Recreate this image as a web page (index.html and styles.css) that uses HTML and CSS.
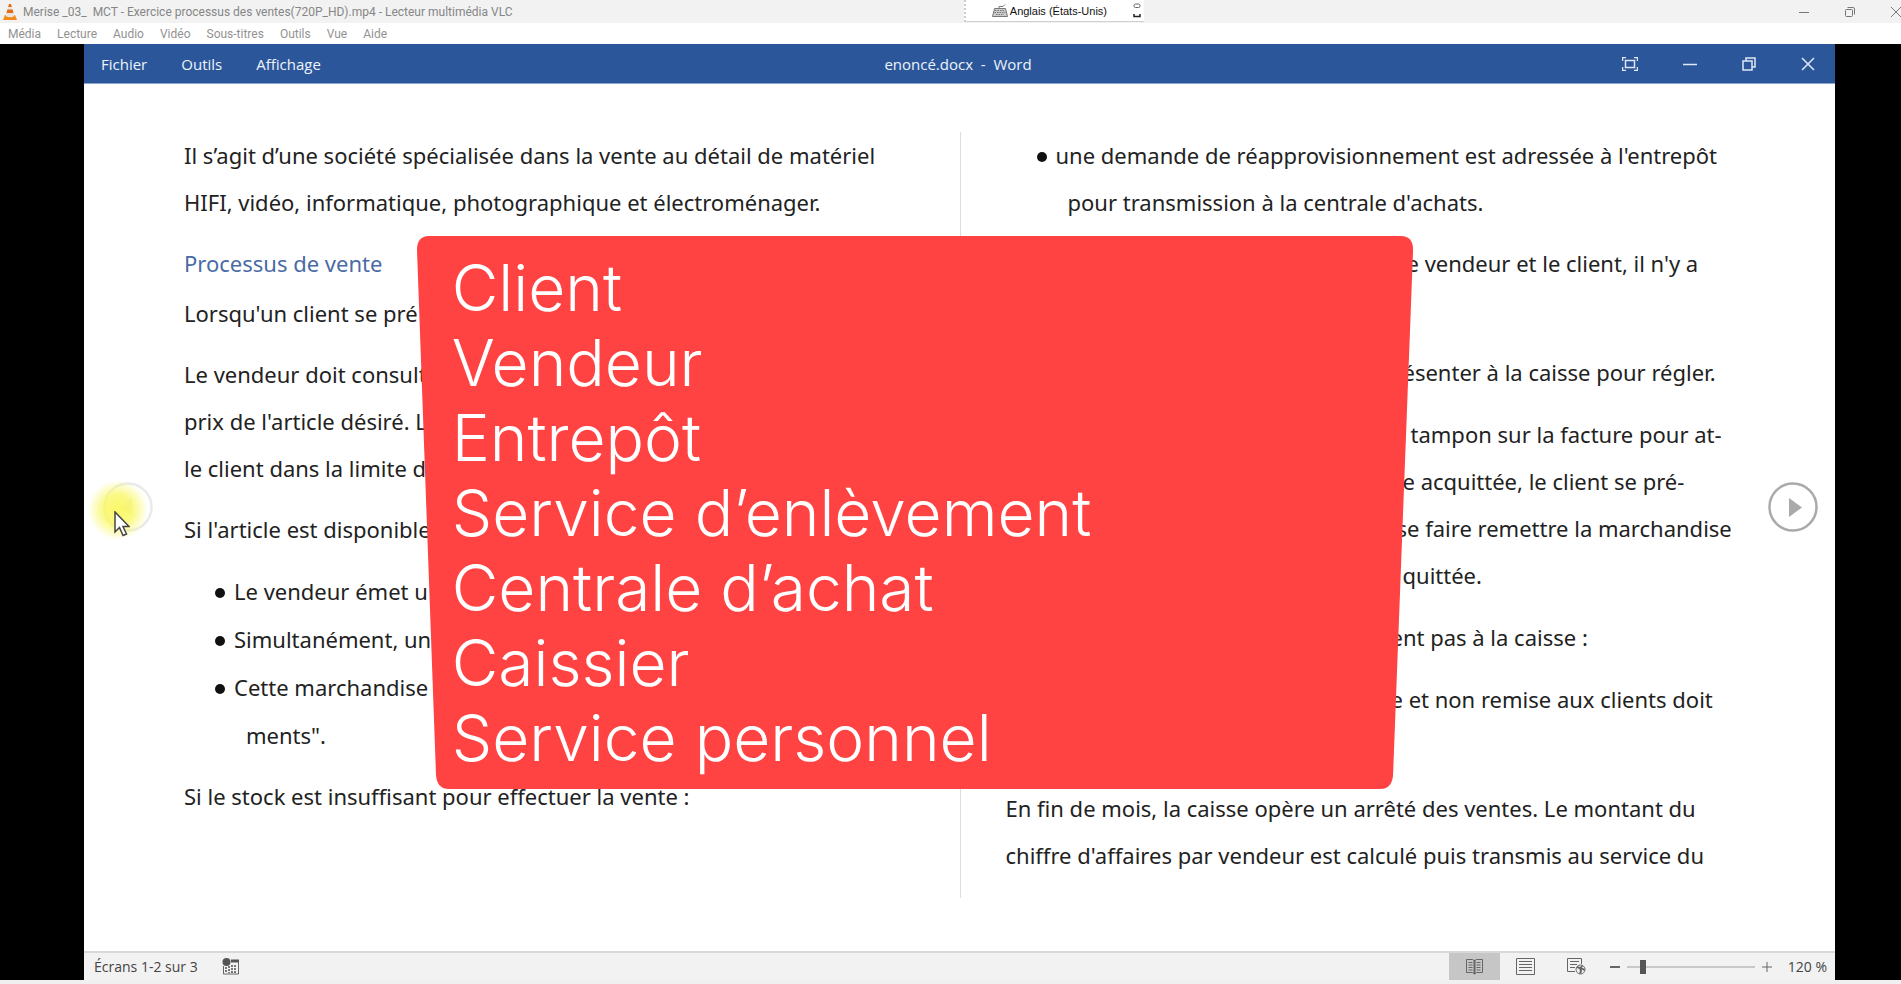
FILE: index.html
```
<!DOCTYPE html>
<html lang="fr">
<head>
<meta charset="utf-8">
<title>Lecteur multimédia VLC</title>
<link rel="stylesheet" href="styles.css">
</head>
<body>
<header class="titlebar">
  <svg class="cone" width="14" height="16" viewBox="0 0 14 16">
    <path d="M2 11h10l2 5H0z" fill="#f58a1c"/>
    <path d="M5.600 1h2.800l3 11q-4.400 2.500-8.800 0z" fill="#e8e4e0"/>
    <path d="M6 0h2l.8 3H5.200zM4.400 5.500h5.200l.9 3.500h-7z" fill="#e56a12"/>
  </svg>
  <span class="apptitle">Merise _03_&nbsp; MCT - Exercice processus des ventes(720P_HD).mp4 - Lecteur multimédia VLC</span>
  <div class="langbar">
    <svg width="16" height="13" viewBox="0 0 16 13" fill="none" stroke="#777">
      <path d="M7 4V2.500h4L13 .5"/><path d="M2.500 4.500h11l2 8H.5z" fill="#ccc"/>
      <path d="M3 6.500h10M2.500 8.500h11M4 10.500h8" stroke-dasharray="1.500 1"/>
    </svg>
    <span>Anglais (États-Unis)</span>
    <svg class="langopts" width="8" height="15" viewBox="0 0 8 15" fill="none" stroke="#666"><rect x="1" y="1" width="6" height="3.500" rx="1.500"/><path d="M1 11v2.500h6V11" stroke="#222" stroke-width="1.500"/></svg>
  </div>
  <div class="wincontrols">
    <button aria-label="Réduire"><svg width="10" height="10" viewBox="0 0 10 10"><path d="M0 5.500h10"/></svg></button>
    <button aria-label="Restaurer"><svg width="10" height="10" viewBox="0 0 10 10"><rect x=".5" y="2.500" width="7" height="7" rx="1"/><path d="M2.500 .5h5.500q1.500 0 1.500 1.500v5.500"/></svg></button>
    <button aria-label="Fermer"><svg width="10" height="10" viewBox="0 0 10 10"><path d="M0 0l10 10M10 0L0 10"/></svg></button>
  </div>
</header>
<nav class="menubar">
  <button>Média</button><button>Lecture</button><button>Audio</button><button>Vidéo</button><button>Sous-titres</button><button>Outils</button><button>Vue</button><button>Aide</button>
</nav>
<main class="video">
  <section class="word">
    <header class="wordbar">
      <nav class="wordmenu"><button>Fichier</button><button>Outils</button><button>Affichage</button></nav>
      <h1>enoncé.docx&nbsp; -&nbsp; Word</h1>
      <div class="wordcontrols">
        <button aria-label="Plein écran"><svg width="16" height="14" viewBox="0 0 16 14"><path d="M.5 4V.5H4M12 .5h3.500V4M15.500 10v3.500H12M4 13.500H.5V10"/><rect x="3.500" y="3.500" width="9" height="7"/></svg></button>
        <button aria-label="Réduire"><svg width="14" height="14" viewBox="0 0 14 14"><path d="M0 7.500h14"/></svg></button>
        <button aria-label="Restaurer"><svg width="14" height="14" viewBox="0 0 14 14"><rect x="1" y="4" width="9" height="9"/><path d="M4 4V1h9v9h-3"/></svg></button>
        <button aria-label="Fermer"><svg width="14" height="14" viewBox="0 0 14 14"><path d="M1 1l12 12M13 1L1 13"/></svg></button>
      </div>
    </header>
    <div class="reader">
      <article class="column">
        <p>Il s’agit d’une société spécialisée dans la vente au détail de matériel<br>HIFI, vidéo, informatique, photographique et électroménager.</p>
        <h2>Processus de vente</h2>
        <p>Lorsqu'un client se pré</p>
        <p>Le vendeur doit consult<br>prix de l'article désiré. L<br>le client dans la limite d</p>
        <p>Si l'article est disponible</p>
        <ul>
          <li>Le vendeur émet u</li>
          <li>Simultanément, un</li>
          <li>Cette marchandise<br><span class="hang">ments".</span></li>
        </ul>
        <p>Si le stock est insuffisant pour effectuer la vente :</p>
      </article>
      <article class="column right">
        <ul>
          <li>une demande de réapprovisionnement est adressée à l'entrepôt<br><span class="hang">pour transmission à la centrale d'achats.</span></li>
        </ul>
        <p class="far two">e vendeur et le client, il n'y a</p>
        <p class="mid">ésenter à la caisse pour régler.</p>
        <p class="mid"><span class="tab">tampon sur la facture pour at-</span><br>e acquittée, le client se pré-<br><span class="out">se faire remettre la marchandise</span><br>quittée.</p>
        <p class="near">ent pas à la caisse :</p>
        <p class="near two">e et non remise aux clients doit</p>
        <p>En fin de mois, la caisse opère un arrêté des ventes. Le montant du<br>chiffre d'affaires par vendeur est calculé puis transmis au service du</p>
      </article>
      <button class="pager prev" aria-label="Écran précédent"><svg width="50" height="50" viewBox="0 0 50 50"><circle cx="25" cy="25" r="23.500" fill="none" stroke="#777" stroke-width="2.500"/><path d="M29 16v18l-12-9z" fill="#777"/></svg></button>
      <button class="pager next" aria-label="Écran suivant"><svg width="50" height="50" viewBox="0 0 50 50"><circle cx="25" cy="25" r="23.500" fill="#fff" stroke="#aaa" stroke-width="2.500"/><path d="M21 16v19l13-9.500z" fill="#aaa"/></svg></button>
      <div class="halo"></div>
      <svg class="pointer" width="16" height="26" viewBox="0 0 16 26"><path d="M1 1v20l4.500-4.500L9 24.500l3.500-1.500L9 15.500h6z" fill="#fff" stroke="#444" stroke-width="1.500"/></svg>
      <aside class="actors">
        <svg class="panel" viewBox="0 0 998 553" preserveAspectRatio="none"><path d="M12 0H984Q996 0 996 14L976 539Q975 553 963 553H32Q20 553 19 539L0 14Q0 0 12 0z" fill="#ff4242"/></svg>
        <ul>
          <li>Client</li><li>Vendeur</li><li>Entrepôt</li><li>Service d’enlèvement</li><li>Centrale d’achat</li><li>Caissier</li><li>Service personnel</li>
        </ul>
      </aside>
    </div>
    <footer class="status">
      <span>Écrans 1-2 sur 3</span>
      <svg class="macro" width="18" height="17" viewBox="0 0 18 17"><path d="M9 1.500h8v3H9z" fill="#555"/><path d="M1.500 8v8h15V4" fill="none" stroke="#666"/><path d="M4 9v6M7 8v7M10 7v8M13 7v8" stroke="#777" stroke-width="2" stroke-dasharray="2 1"/><circle cx="4.500" cy="4" r="4" fill="#555"/></svg>
      <div class="views">
        <button class="on" aria-label="Mode lecture"><svg width="17" height="17" viewBox="0 0 17 17"><path d="M.5 1.500h6l2 1 2-1h6v13h-6l-2 1.500-2-1.500h-6z"/><path d="M8.500 2v14" stroke-width="2"/><path d="M2.500 4.500h4M2.500 7h4M2.500 9.500h4M2.500 12h4M10.500 4.500h4M10.500 7h4M10.500 9.500h4M10.500 12h4"/></svg></button>
        <button aria-label="Page"><svg width="19" height="17" viewBox="0 0 19 17"><path d="M.5.5h18v16H.5zM3 3.500h13M3 6.500h13M3 9.500h13M3 12.500h13"/></svg></button>
        <button aria-label="Web"><svg width="19" height="17" viewBox="0 0 19 17"><path d="M8 13.500H.5V.5h14V6M3 3.500h9M3 6.500h7M3 9.500h5"/><circle cx="13.500" cy="11.500" r="4.500"/><path d="M10 9l3 1 1 3-1 2.500M15 7.500L14 10l3.500 2" stroke-width="2"/></svg></button>
      </div>
      <div class="zoom">
        <button aria-label="Zoom arrière"><svg width="10" height="10" viewBox="0 0 10 10"><path d="M0 5h10" stroke-width="2"/></svg></button>
        <input type="range" min="10" max="500" value="65" aria-label="Zoom">
        <button aria-label="Zoom avant"><svg width="10" height="10" viewBox="0 0 10 10"><path d="M0 5h10M5 0v10"/></svg></button>
        <span class="percent">120 %</span>
      </div>
    </footer>
  </section>
</main>
</body>
</html>
```

FILE: styles.css
```
* { box-sizing: border-box; }
body {
  margin: 0;
  height: 100vh;
  display: flex;
  flex-direction: column;
  overflow: hidden;
  background: #f0f0f0;
  font-family: "Open Sans", "Noto Sans", sans-serif;
}
button {
  border: 0;
  padding: 0;
  background: none;
  font: inherit;
  color: inherit;
  display: flex;
  align-items: center;
  justify-content: center;
}
h1, h2, p, ul { margin: 0; padding: 0; font: inherit; list-style: none; }
svg { display: block; flex: none; }

.titlebar {
  position: relative;
  display: flex;
  align-items: center;
  height: 23px;
  padding-left: 3px;
  background: #f2f2f2;
  color: #868686;
  font-family: Roboto, "Open Sans", sans-serif;
  font-size: 12px;
  flex: none;
}
.cone { margin-right: 6px; }
.langbar {
  position: absolute;
  left: 50.700%;
  top: 0;
  width: 180px;
  height: 22px;
  padding-left: 26px;
  display: flex;
  align-items: center;
  gap: 2px;
  background: #fff;
  border-left: 2px dotted #ccc;
  border-bottom: 1px solid #d0d0d0;
  color: #111;
  font-family: "Liberation Sans", sans-serif;
  font-size: 11px;
}
.langopts { margin-left: auto; margin-right: 3px; }
.wincontrols { margin-left: auto; display: flex; gap: 36px; }
.wincontrols svg { fill: none; stroke: #777; }

.menubar {
  display: flex;
  gap: 16px;
  height: 21px;
  padding-left: 8px;
  background: #fff;
  color: #929292;
  font-family: Roboto, "Open Sans", sans-serif;
  font-size: 12px;
  flex: none;
}
.video {
  flex: 1;
  min-height: 0;
  margin-bottom: 4px;
  padding: 0 66px 0 84px;
  background: #000;
  display: flex;
}
.word { flex: 1; display: flex; flex-direction: column; background: #fff; }
.wordbar {
  display: grid;
  grid-template-columns: 1fr auto 1fr;
  align-items: center;
  height: 40px;
  padding: 0 20px 0 17px;
  background: #2b579a;
  border-bottom: 1px solid #8aa5cf;
  color: #eef3fb;
  font-size: 15px;
}
.wordmenu { display: flex; gap: 34px; }
.wordcontrols { display: flex; justify-content: flex-end; gap: 45px; }
.wordcontrols svg { fill: none; stroke: #dfe8f6; stroke-width: 1.500; }

.reader {
  position: relative;
  flex: 1;
  display: grid;
  grid-template-columns: 1fr 1fr;
  padding: 48px 0 53px;
  color: #222;
  font-family: "Noto Sans", "Open Sans", sans-serif;
  font-size: 22px;
  line-height: 47px;
  white-space: nowrap;
}
.column { padding-left: 100px; }
.column p, .column ul { margin-bottom: 14px; }
.column h2 { color: #4a6ba5; margin-bottom: 3px; }
.column ul { padding-left: 31px; line-height: 48px; }
.column li { display: block; padding-left: 19px; }
.column li::before {
  content: "";
  display: inline-block;
  width: 10px;
  height: 10px;
  margin: 0 9px 2px -19px;
  border-radius: 50%;
  background: #111;
}
.hang { padding-left: 12px; }
.column.right { padding-left: 45px; border-left: 1px solid #ddd; }
.column.right ul { line-height: 47px; }
.column.right p { margin-bottom: 15px; }
.column .two { padding-bottom: 47px; }
.column .far { padding-left: 401px; }
.column .mid { padding-left: 397px; }
.column .near { padding-left: 385px; }
.tab { padding-left: 8px; }
.out { margin-left: -6px; }

.pager { position: absolute; top: 398px; }
.prev { left: 19px; opacity: .15; }
.next { right: 17px; }
.halo {
  position: absolute;
  left: 4px;
  top: 396px;
  width: 60px;
  height: 60px;
  border-radius: 50%;
  background: radial-gradient(closest-side, rgba(250, 248, 90, .9) 0%, rgba(250, 248, 100, .8) 50%, rgba(255, 255, 160, 0) 100%);
}
.pointer { position: absolute; left: 30px; top: 427px; }

.actors {
  position: absolute;
  left: 19%;
  top: 152px;
  width: 57%;
  padding: 14px 0 14px 35px;
  color: #fff;
  font-family: Inter, "Open Sans", sans-serif;
  font-weight: 300;
  font-size: 64px;
  line-height: 75px;
}
.panel { position: absolute; left: 0; top: 0; width: 100%; height: 100%; }
.actors ul { position: relative; }

.status {
  display: flex;
  align-items: center;
  height: 29px;
  padding: 0 8px 0 10px;
  background: #f2f2f2;
  border-top: 2px solid #d8d8d8;
  color: #444;
  font-size: 14px;
}
.macro { margin-left: 24px; }
.views { margin-left: auto; display: flex; align-self: stretch; }
.views button { width: 51px; }
.views .on { background: #c6c6c6; }
.views svg, .zoom svg { fill: none; stroke: #666; }
.zoom { display: flex; align-items: center; margin-left: 8px; }
.zoom input {
  appearance: none;
  width: 128px;
  height: 14px;
  margin: 0 7px;
  background: linear-gradient(#c8c8c8, #c8c8c8) center / 100% 2px no-repeat;
}
.zoom input::-webkit-slider-thumb { appearance: none; width: 6px; height: 14px; background: #555; }
.percent { margin-left: 16px; }
```
